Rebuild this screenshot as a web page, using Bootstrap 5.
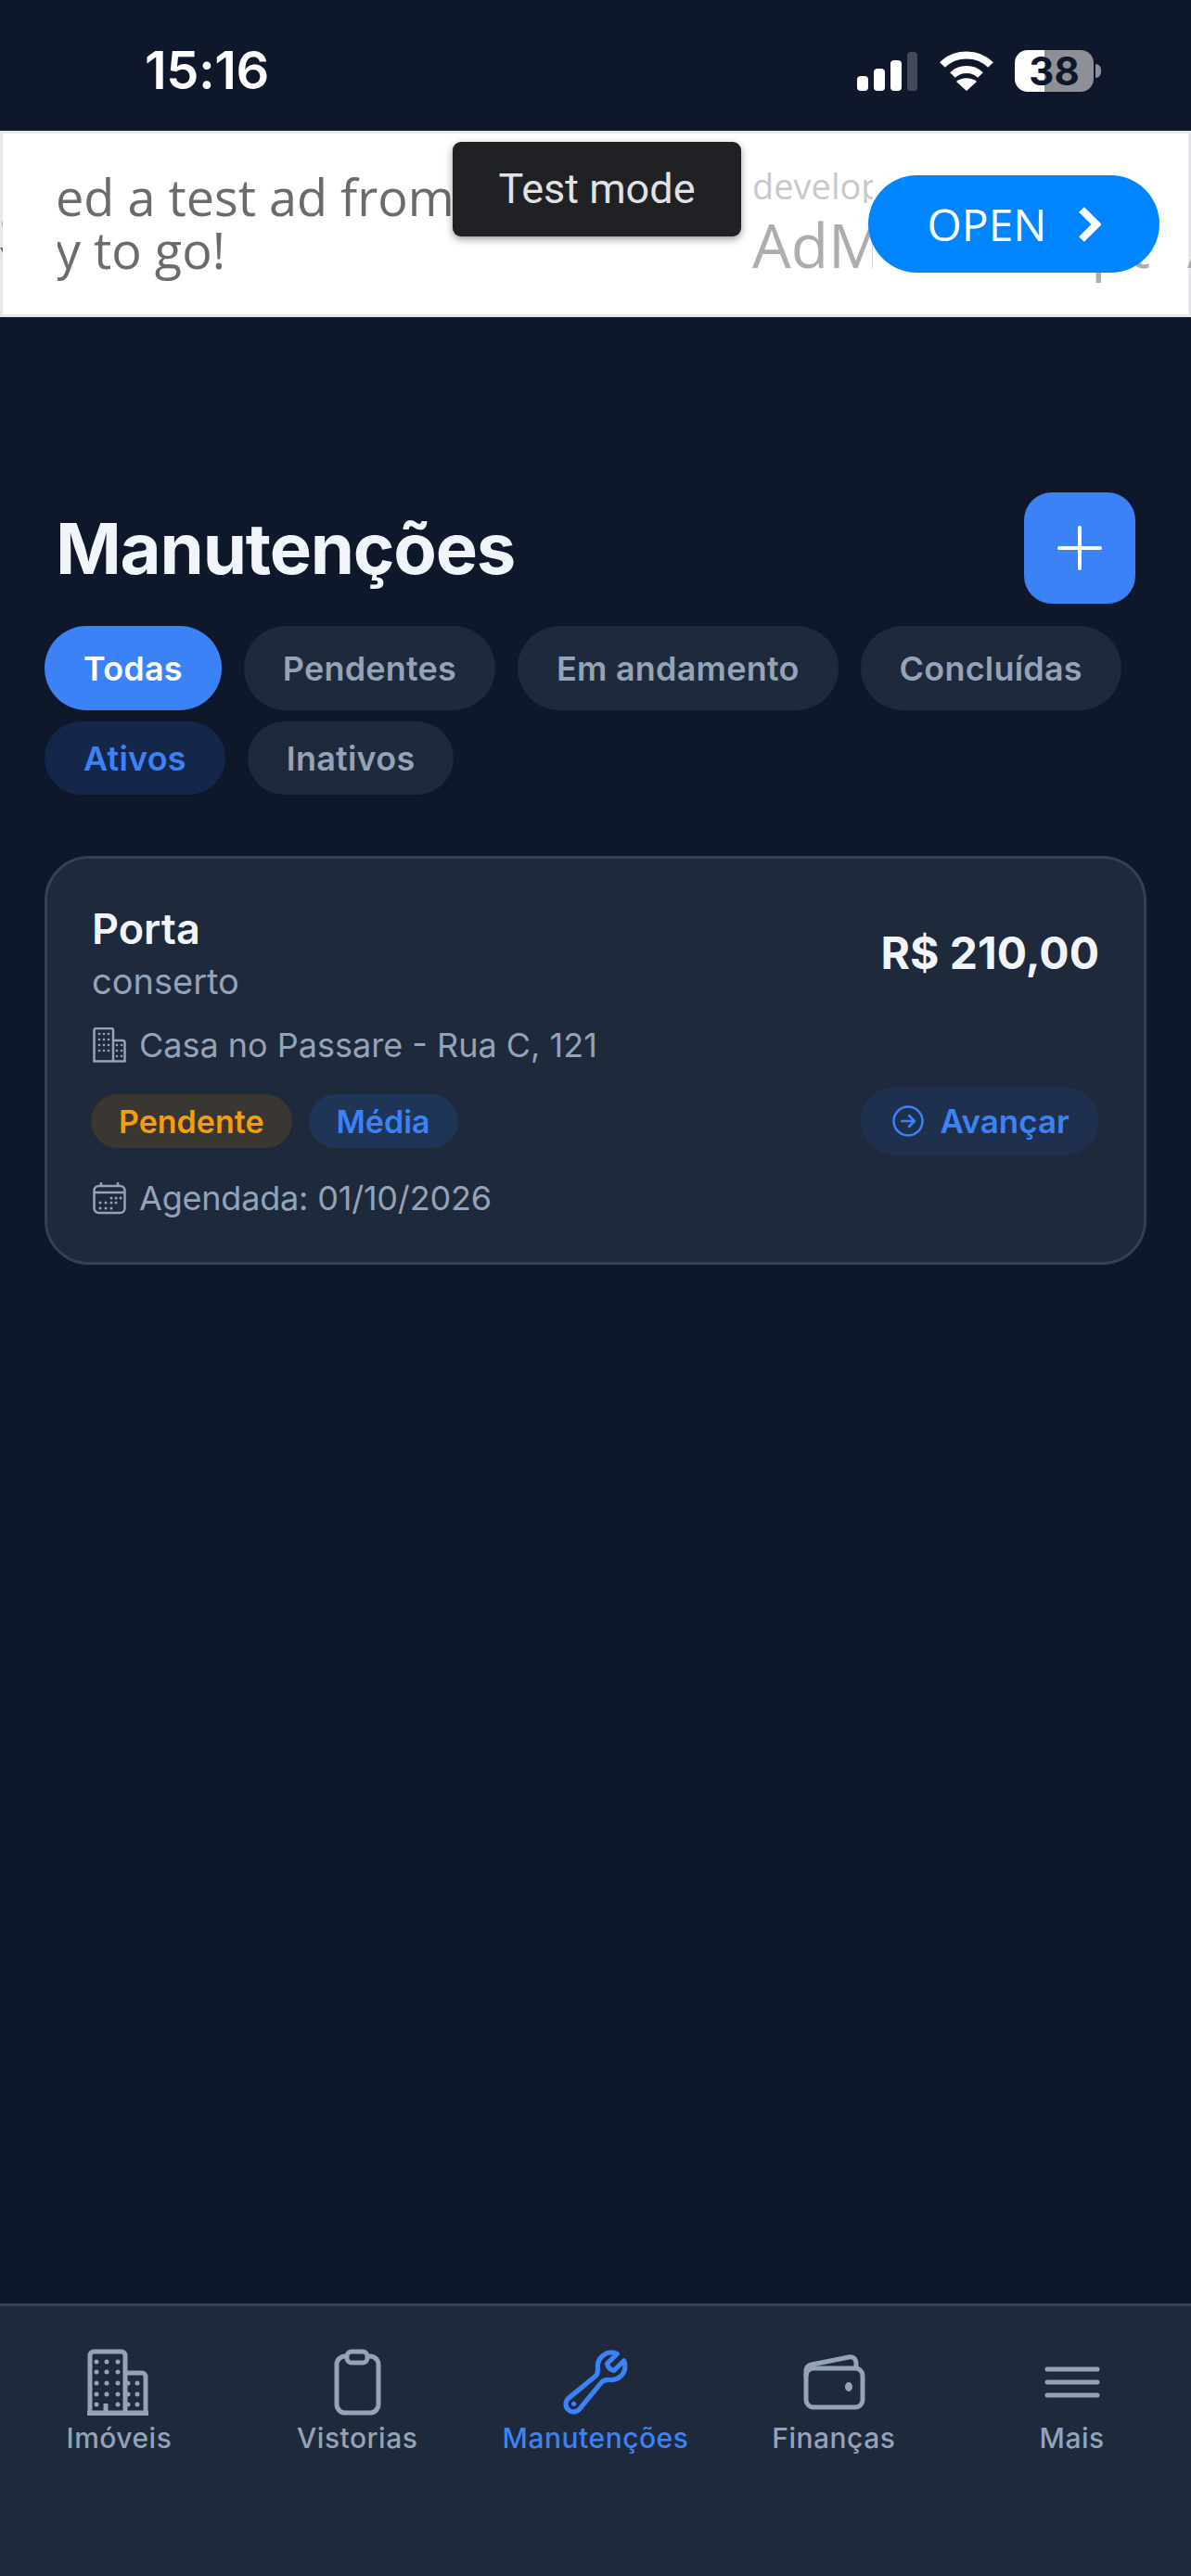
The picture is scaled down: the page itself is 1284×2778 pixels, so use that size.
<!DOCTYPE html>
<html lang="pt-BR">
  <head>
    <meta charset="UTF-8" />
    <meta name="viewport" content="width=device-width, initial-scale=1.0" />
    <link href="https://cdn.jsdelivr.net/npm/bootstrap@5.3.3/dist/css/bootstrap.min.css" rel="stylesheet" />
    <title>Manutenções</title>
    <style>
      body { background: #0f172a; font-family: Inter, "Noto Sans", sans-serif; color: #f1f5f9; }
      .app-shell { width: 1284px; height: 2778px; overflow: hidden; }

      /* status bar */
      .status-bar { height: 141px; padding: 0 105px 0 156px; }
      .status-time { font-size: 56px; font-weight: 600; letter-spacing: -.5px; color: #fff; line-height: 1; padding-top: 10px; }
      .status-icons { gap: 23px; padding-top: 12px; }
      .battery-box { position: relative; width: 85px; height: 45px; border-radius: 14px; background: linear-gradient(90deg, #fff 38%, #8e8f97 38%); color: #0f172a; font-size: 42px; font-weight: 700; line-height: 45px; text-align: center; }
      .battery-box::after { content: ""; position: absolute; right: -8px; top: 15px; width: 6px; height: 15px; border-radius: 0 8px 8px 0; background: #8e8f97; }

      /* test ad */
      .ad-banner { position: relative; height: 201px; background: #fff; box-shadow: inset 0 0 0 3px #e5e7eb; overflow: hidden; font-family: "Open Sans", sans-serif; }
      .ad-clip { position: absolute; overflow: hidden; white-space: nowrap; line-height: 1; }
      .ad-main { left: 62px; width: 426px; height: 70px; color: #6b6b6b; font-size: 54px; text-indent: -2px; }
      .ad-edge { left: 0; width: 3px; color: #6b6b6b; font-size: 54px; }
      .ad-small { left: 811px; width: 130px; top: 40px; color: #c8c8c8; font-size: 38px; }
      .ad-big { top: 89px; height: 90px; color: #adadad; font-size: 66px; }
      .test-badge { position: absolute; left: 488px; top: 12px; width: 311px; height: 102px; background: #202124; color: #e0e2e5; border-radius: 9px; box-shadow: 0 3px 9px rgba(0,0,0,.4); font-family: Roboto, sans-serif; font-size: 45px; }
      .open-btn { position: absolute; left: 936px; top: 48px; width: 314px; height: 105px; border-radius: 53px; background: #0084ff; color: #fff; font-size: 48px; gap: 34px; }

      /* page */
      .page-main { padding: 0 48px; }
      .page-title { font-size: 76px; font-weight: 700; letter-spacing: -1.2px; line-height: 1; margin: 0 0 0 12px; color: #f1f5f9; }
      .page-head { padding-top: 189px; padding-right: 12px; }
      .add-btn { width: 120px; height: 120px; border-radius: 30px; background: #3b82f6; border: 0; padding: 0; }
      .chip-row { gap: 24px; }
      .chip { border-radius: 48px; background: #1e293b; color: #94a3b8; font-size: 36px; font-weight: 600; letter-spacing: .2px; padding: 0 42px; display: flex; align-items: center; }
      .chip-tall { height: 91px; margin-top: 24px; }
      .chip-short { height: 79px; margin-top: 12px; }
      .chip-active { background: #3b82f6; color: #fff; }
      .chip-blue { background: #14264a; color: #3b82f6; }

      .job-card { margin-top: 66px; height: 441px; background: #1e293b; border: 3px solid #334155; border-radius: 48px; padding: 0 48px 0 49px; --bs-card-bg: #1e293b; }
      .job-title { font-size: 45px; font-weight: 600; line-height: 1; color: #f1f5f9; margin-top: 53px; margin-left: -1px; }
      .job-sub { font-size: 38px; color: #94a3b8; line-height: 1; margin-top: 15px; margin-bottom: 3px; margin-left: -1px; }
      .job-line { font-size: 36px; color: #94a3b8; line-height: 1; gap: 14px; }
      .job-date { letter-spacing: -.2px; }
      .job-price { font-size: 48px; font-weight: 700; color: #f1f5f9; line-height: 1; margin-top: 78px; }
      .tag-row { gap: 18px; margin-left: -2px; }
      .tag-pill { height: 58px; border-radius: 29px; font-size: 34px; font-weight: 600; padding: 0 30px; display: flex; align-items: center; }
      .tag-amber { background: #3a3733; color: #f59e0b; }
      .tag-blue { background: #1e3557; color: #3b82f6; }
      .next-btn { height: 74px; border: 0; border-radius: 37px; background: #1f2f4e; color: #3b82f6; font-size: 35px; font-weight: 600; padding: 0 32px 0 34px; gap: 17px; }

      /* bottom tabs */
      .tab-bar { height: 294px; background: #1e293b; border-top: 3px solid #334155; }
      .tab-item { width: 20%; padding-top: 46px; color: #94a3b8; font-size: 30px; font-weight: 500; letter-spacing: .5px; line-height: 1; gap: 9px; }
      .tab-on { color: #3b82f6; }
      .tab-icon { width: 72px; height: 72px; display: block; }
    </style>
  </head>
  <body>
    <div class="app-shell d-flex flex-column">
      <div class="status-bar d-flex justify-content-between align-items-center flex-shrink-0">
        <div class="status-time">15:16</div>
        <div class="status-icons d-flex align-items-center">
          <svg width="66" height="42" viewBox="0 0 66 42" fill="#fff">
            <rect x="0" y="26" width="12" height="16" rx="4" />
            <rect x="18" y="18" width="12" height="24" rx="4" />
            <rect x="36" y="9" width="12" height="33" rx="4" />
            <rect x="54" y="0" width="11" height="42" rx="4" fill="#454a5a" />
          </svg>
          <svg width="58" height="43" viewBox="0 0 58 43" fill="none" stroke="#fff" stroke-width="8">
            <path d="M3 15C17 1 41 1 55 15" />
            <path d="M14 26C22 18 36 18 44 26" />
            <path d="M29 43L18 33C24 28 34 28 40 33Z" fill="#fff" stroke="none" />
          </svg>
          <div class="battery-box">38</div>
        </div>
      </div>

      <div class="ad-banner flex-shrink-0">
        <div class="ad-clip ad-edge" style="top: 60px">a</div>
        <div class="ad-clip ad-edge" style="top: 117px">Y</div>
        <div class="ad-clip ad-main" style="top: 44px">ed a test ad from</div>
        <div class="ad-clip ad-main" style="top: 101px">y to go!</div>
        <div class="ad-clip ad-small">develop</div>
        <div class="ad-clip ad-big" style="left: 811px; width: 130px">AdMob</div>
        <div class="ad-clip ad-big" style="left: 1176px; width: 74px">pt</div>
        <div class="ad-clip ad-big" style="left: 1280px; width: 4px">A</div>
        <div class="test-badge d-flex align-items-center justify-content-center">Test mode</div>
        <div class="open-btn d-flex align-items-center justify-content-center">
          <span>OPEN</span>
          <svg width="24" height="38" viewBox="0 0 24 38" fill="none" stroke="#fff" stroke-width="8"><path d="M3 3L19 19L3 35" /></svg>
        </div>
      </div>

      <main class="page-main flex-grow-1">
        <div class="page-head d-flex justify-content-between align-items-center">
          <h1 class="page-title">Manutenções</h1>
          <button class="add-btn d-flex align-items-center justify-content-center" type="button" aria-label="Adicionar">
            <svg width="48" height="48" viewBox="0 0 48 48" stroke="#fff" stroke-width="4" stroke-linecap="round"><path d="M24 2V46M2 24H46" /></svg>
          </button>
        </div>

        <div class="d-flex chip-row">
          <span class="chip chip-tall chip-active">Todas</span>
          <span class="chip chip-tall">Pendentes</span>
          <span class="chip chip-tall">Em andamento</span>
          <span class="chip chip-tall">Concluídas</span>
        </div>
        <div class="d-flex chip-row">
          <span class="chip chip-short chip-blue">Ativos</span>
          <span class="chip chip-short">Inativos</span>
        </div>

        <div class="card job-card">
          <div class="d-flex justify-content-between">
            <div>
              <div class="job-title">Porta</div>
              <div class="job-sub">conserto</div>
            </div>
            <div class="job-price">R$ 210,00</div>
          </div>
          <div class="job-line d-flex align-items-center" style="margin-top: 28px">
            <svg width="36" height="38" viewBox="0 0 36 38" fill="none" stroke="#94a3b8" stroke-width="2.5">
              <path d="M1.5 36.5V3a2 2 0 0 1 2-2H20a2 2 0 0 1 2 2V36.5ZM22 14H32a2.500 2.500 0 0 1 2.500 2.500V36.500H22M1.500 36.500H34" />
              <g fill="#94a3b8" stroke="none">
                <circle cx="7" cy="7" r="1.300" /><circle cx="12" cy="7" r="1.300" /><circle cx="17" cy="7" r="1.300" />
                <circle cx="7" cy="13" r="1.300" /><circle cx="12" cy="13" r="1.300" /><circle cx="17" cy="13" r="1.300" />
                <circle cx="7" cy="19" r="1.300" /><circle cx="12" cy="19" r="1.300" /><circle cx="17" cy="19" r="1.300" />
                <circle cx="7" cy="25" r="1.300" /><circle cx="12" cy="25" r="1.300" /><circle cx="17" cy="25" r="1.300" />
                <circle cx="26" cy="19" r="1.300" /><circle cx="31" cy="19" r="1.300" />
                <circle cx="26" cy="25" r="1.300" /><circle cx="31" cy="25" r="1.300" />
                <circle cx="26" cy="31" r="1.300" /><circle cx="31" cy="31" r="1.300" />
              </g>
            </svg>
            <span>Casa no Passare - Rua C, 121</span>
          </div>
          <div class="d-flex justify-content-between align-items-center" style="margin-top: 26px">
            <div class="d-flex tag-row">
              <span class="tag-pill tag-amber">Pendente</span>
              <span class="tag-pill tag-blue">Média</span>
            </div>
            <button class="next-btn d-flex align-items-center" type="button">
              <svg width="34" height="34" viewBox="0 0 34 34" fill="none" stroke="#3b82f6" stroke-width="2.500" stroke-linecap="round" stroke-linejoin="round">
                <circle cx="17" cy="17" r="15.500" /><path d="M10 17H24M18 11L24 17L18 23" />
              </svg>
              <span>Avançar</span>
            </button>
          </div>
          <div class="job-line d-flex align-items-center" style="margin-top: 28px">
            <svg width="36" height="36" viewBox="0 0 36 36" fill="none" stroke="#94a3b8" stroke-width="2.500">
              <rect x="1.500" y="5" width="33" height="29" rx="5" /><path d="M1.500 12H34.500M9 1V5M27 1V5" />
              <g fill="#94a3b8" stroke="none">
                <circle cx="20" cy="18" r="1.500" /><circle cx="25" cy="18" r="1.500" /><circle cx="30" cy="18" r="1.500" />
                <circle cx="8" cy="23" r="1.500" /><circle cx="14" cy="23" r="1.500" /><circle cx="20" cy="23" r="1.500" /><circle cx="25" cy="23" r="1.500" />
                <circle cx="8" cy="29" r="1.500" /><circle cx="14" cy="29" r="1.500" /><circle cx="20" cy="29" r="1.500" />
              </g>
            </svg>
            <span class="job-date">Agendada: 01/10/2026</span>
          </div>
        </div>
      </main>

      <nav class="tab-bar d-flex flex-shrink-0">
        <div class="tab-item d-flex flex-column align-items-center">
          <svg class="tab-icon" viewBox="3 0 72 72" fill="none" stroke="#94a3b8" stroke-width="5">
            <path d="M8 69V7a4 4 0 0 1 4-4H42a4 4 0 0 1 4 4V69ZM46 26H64a4 4 0 0 1 4 4V69H46M5 69.500H71M25 69V59" />
            <g fill="#94a3b8" stroke="none">
              <circle cx="15" cy="14" r="2.500" /><circle cx="26" cy="14" r="2.500" /><circle cx="38" cy="14" r="2.500" />
              <circle cx="15" cy="25" r="2.500" /><circle cx="26" cy="25" r="2.500" /><circle cx="38" cy="25" r="2.500" />
              <circle cx="15" cy="37" r="2.500" /><circle cx="26" cy="37" r="2.500" /><circle cx="38" cy="37" r="2.500" />
              <circle cx="15" cy="49" r="2.500" /><circle cx="26" cy="49" r="2.500" /><circle cx="38" cy="49" r="2.500" />
              <circle cx="15" cy="60" r="2.500" /><circle cx="38" cy="60" r="2.500" />
              <circle cx="49" cy="37" r="2.500" /><circle cx="59" cy="37" r="2.500" />
              <circle cx="49" cy="49" r="2.500" /><circle cx="59" cy="49" r="2.500" />
              <circle cx="49" cy="60" r="2.500" /><circle cx="59" cy="60" r="2.500" />
            </g>
          </svg>
          <span>Imóveis</span>
        </div>
        <div class="tab-item d-flex flex-column align-items-center">
          <svg class="tab-icon" viewBox="0 0 72 72" fill="none" stroke="#94a3b8" stroke-width="5">
            <rect x="14" y="8" width="45" height="61" rx="9" /><rect x="25" y="3" width="22" height="12" rx="5" fill="#1e293b" />
          </svg>
          <span>Vistorias</span>
        </div>
        <div class="tab-item tab-on d-flex flex-column align-items-center">
          <svg class="tab-icon" viewBox="1 1 22 22" fill="none" stroke="#3b82f6" stroke-width="1.600" stroke-linecap="round" stroke-linejoin="round">
            <path d="M21.750 6.750a4.500 4.500 0 01-4.884 4.484c-1.076-.091-2.264.071-2.950.904l-7.152 8.684a2.548 2.548 0 11-3.586-3.586l8.684-7.152c.833-.686.995-1.874.904-2.950a4.500 4.500 0 016.336-4.486l-3.276 3.276a3.004 3.004 0 002.250 2.250l3.276-3.276c.256.565.398 1.192.398 1.852z" />
            <path d="M4.867 19.125h.008v.008h-.008v-.008z" />
          </svg>
          <span>Manutenções</span>
        </div>
        <div class="tab-item d-flex flex-column align-items-center">
          <svg class="tab-icon" viewBox="2 0 72 72" fill="none" stroke="#94a3b8" stroke-width="5">
            <rect x="8" y="21" width="61" height="42" rx="8" />
            <path d="M8 30V24c0-4 2-6 6-7L54 9c5-1 8 2 8 7v5" />
            <ellipse cx="54" cy="41" rx="4" ry="5" fill="#94a3b8" stroke="none" />
          </svg>
          <span>Finanças</span>
        </div>
        <div class="tab-item d-flex flex-column align-items-center">
          <svg class="tab-icon" viewBox="0 0 72 72" fill="none" stroke="#94a3b8" stroke-width="5" stroke-linecap="round">
            <path d="M9 22H63M9 36H63M9 50H63" />
          </svg>
          <span>Mais</span>
        </div>
      </nav>
    </div>
    <script src="https://cdn.jsdelivr.net/npm/bootstrap@5.3.3/dist/js/bootstrap.bundle.min.js"></script>
  </body>
</html>
